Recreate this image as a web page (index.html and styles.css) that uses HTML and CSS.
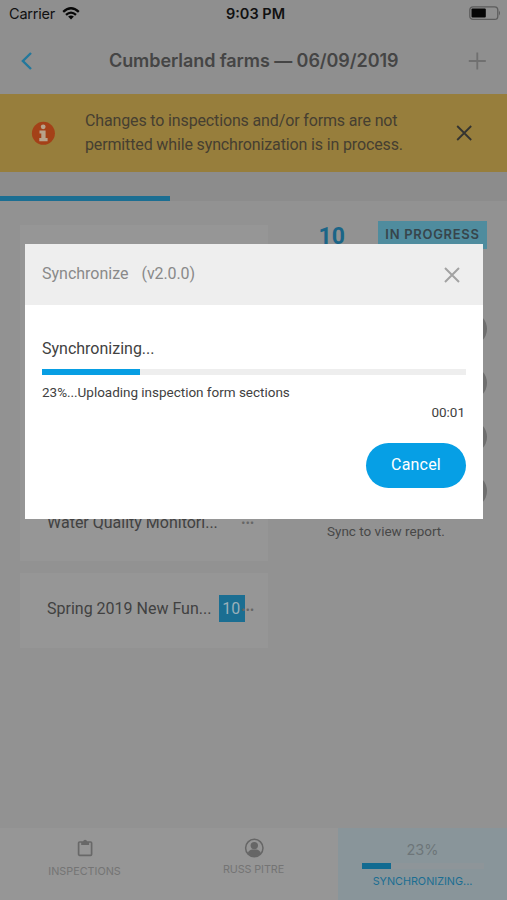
FILE: index.html
```html
<!DOCTYPE html>
<html lang="en">
<head>
<meta charset="utf-8">
<title>Synchronize</title>
<link rel="stylesheet" href="styles.css">
</head>
<body>
<div class="app">
  <header class="status">
    <span class="carrier">Carrier</span>
    <svg class="wifi" width="18" height="13" viewBox="0 0 18 13"><g fill="none" stroke="#080808" stroke-width="2.3"><path d="M1.2 4.8Q9-2.2 16.8 4.8"/><path d="M4 7.9Q9 3.4 14 7.9"/></g><path d="M6.1 9.6Q9 7.4 11.9 9.6L9 12.6Z" fill="#080808"/></svg>
    <span class="clock">9:03 PM</span>
    <svg class="battery" width="32" height="15" viewBox="0 0 32 15"><rect x=".8" y=".8" width="28" height="12.6" rx="3.2" fill="none" stroke="#5c5c5c" stroke-width="1.3"/><rect x="2.5" y="2.6" width="14.3" height="9" rx="1" fill="#050505"/><path d="M30 4.8Q32 7 30 9.4Z" fill="#5c5c5c"/></svg>
  </header>
  <nav class="nav">
    <svg class="back" width="12" height="18" viewBox="0 0 12 18"><path d="M11 1L2.9 9L11 17" fill="none" stroke="#23789c" stroke-width="2.4"/></svg>
    <h1>Cumberland farms — 06/09/2019</h1>
    <svg class="plus" width="18" height="18" viewBox="0 0 18 18"><path d="M9.3 .5V17.5M.8 9H17.8" stroke="#707070" stroke-width="1.8"/></svg>
  </nav>
  <section class="banner">
    <svg class="info" width="24" height="24" viewBox="0 0 24 24"><circle cx="12.4" cy="12.3" r="11.5" fill="#a44118"/><circle cx="12.2" cy="5.8" r="2.4" fill="#b7a38b"/><path d="M8.5 9.4H14.6V17H16.6V20.2H8.3V17H10.3V12.4H8.5Z" fill="#b7a38b"/></svg>
    <p><span class="line">Changes to inspections and/or forms are not</span><span class="line">permitted while synchronization is in process.</span></p>
    <svg class="dismiss" width="16" height="16" viewBox="0 0 16 16"><path d="M1.2 1L15.2 15M15.2 1L1.2 15" stroke="#343431" stroke-width="1.8"/></svg>
  </section>
  <div class="page-progress"><div class="page-fill"></div></div>
  <main class="content">
    <div class="list">
      <div class="card tall"><span class="name">Water Quality Monitori...</span><span class="dots">•••</span></div>
      <div class="card"><span class="name">Spring 2019 New Fun...</span><span class="count">10</span><span class="dots">•••</span></div>
    </div>
    <aside class="side">
      <div class="summary"><span class="total">10</span><span class="tag">IN PROGRESS</span></div>
      <div class="circles"><i></i><i></i><i></i><i></i></div>
      <p class="report">Sync to view report.</p>
    </aside>
  </main>
  <footer class="tabs">
    <div class="tab">
      <svg width="16" height="18" viewBox="0 0 16 18"><rect x="1.6" y="3" width="13" height="13.3" rx="1" fill="none" stroke="#686868" stroke-width="1.7"/><path d="M4.2 3H6Q6.4.8 8.1 .8T10.3 3H12.1V6H4.2Z" fill="#686868"/></svg>
      <span class="inspections">INSPECTIONS</span>
    </div>
    <div class="tab user">
      <svg width="20" height="20" viewBox="0 0 20 20"><circle cx="10.3" cy="10" r="8.7" fill="none" stroke="#666" stroke-width="1.5"/><circle cx="10.3" cy="7.6" r="3.7" fill="#666"/><path d="M3.7 15.2Q5.3 11.8 8.3 11.6H12.3Q15.3 11.8 16.9 15.2Q14.3 18.3 10.3 18.3T3.7 15.2Z" fill="#666"/></svg>
      <span class="russ">RUSS PITRE</span>
    </div>
    <div class="tab sync">
      <span class="percent">23%</span>
      <div class="mini"><div class="mini-fill"></div></div>
      <span class="syncing">SYNCHRONIZING...</span>
    </div>
  </footer>
  <section class="modal">
    <header class="modal-head">
      <span class="title">Synchronize</span><span class="version">(v2.0.0)</span>
      <svg class="close" width="16" height="16" viewBox="0 0 16 16"><path d="M1 1L15 15M15 1L1 15" stroke="#a2a2a2" stroke-width="2"/></svg>
    </header>
    <div class="modal-body">
      <div class="state">Synchronizing...</div>
      <div class="track"><div class="fill"></div></div>
      <div class="detail">23%...Uploading inspection form sections</div>
      <div class="time">00:01</div>
      <button class="cancel">Cancel</button>
    </div>
  </section>
</div>
</body>
</html>
```
FILE: styles.css
```css
* { box-sizing: border-box; }
body { margin: 0; font-family: Roboto, "Liberation Sans", sans-serif; color: #414141; }
h1, p { margin: 0; }
svg { display: block; flex: none; }
span { white-space: nowrap; }
.app { position: relative; width: 507px; height: 900px; overflow: hidden; display: flex; flex-direction: column; background: #929292; }

.status { height: 28px; flex: none; display: grid; grid-template-columns: 53px 1fr auto 1fr 38px; align-items: center; background: #8f8f8f; color: #111; padding: 0 0 0 9px; font-family: Inter, sans-serif; }
.carrier { font-size: 14.5px; letter-spacing: -.2px; margin-top: -1px; }
.wifi { margin-top: -2px; }
.clock { font-size: 14.5px; font-weight: 600; margin-right: 20px; margin-top: -1px; }
.battery { grid-column: 5; margin-top: -1px; }

.nav { height: 66px; flex: none; display: grid; grid-template-columns: 89px 1fr 18px; align-items: center; padding: 0 21px 0 20px; background: #8f8f8f; }
.nav h1 { font-family: Inter, sans-serif; font-size: 18px; font-weight: 600; letter-spacing: -.08px; line-height: 24px; white-space: nowrap; color: #454545; }

.banner { height: 78px; flex: none; display: grid; grid-template-columns: 54px 1fr 16px; align-items: center; padding: 0 35px 0 31px; background: #977e3c; color: #463f31; }
.line { display: block; font-size: 16px; letter-spacing: -.14px; line-height: 24px; }

.page-progress { height: 29px; flex: none; display: flex; align-items: flex-end; background: #8c8c8c; }
.page-fill { width: 170px; height: 5px; background: #1b6e92; }

.content { flex: 1; display: flex; padding: 20px 20px 0; }
.list { width: 248px; padding-top: 4px; display: flex; flex-direction: column; gap: 12px; }
.card { height: 75px; flex: none; display: flex; align-items: center; padding: 0 14px 4px 27px; background: #969696; }
.card.tall { height: 336px; align-items: flex-end; padding-bottom: 26px; }
.name { width: 173px; font-size: 16px; line-height: 24px; }
.count { width: 26px; height: 27px; line-height: 27px; font-size: 16px; padding-left: 3px; background: #1b6e92; color: #9ab0ba; }
.dots { margin-left: auto; font-family: Inter, sans-serif; font-size: 8px; line-height: 24px; color: #666; letter-spacing: -.2px; }
.card.tall .dots { line-height: 26px; }
.count + .dots { margin-left: -4px; }
.side { flex: 1; display: flex; flex-direction: column; }
.summary { display: flex; height: 28px; justify-content: flex-end; }
.total { font-size: 23px; font-weight: 700; line-height: 32px; margin-right: 33px; color: #1b6587; }
.tag { font-family: Inter, sans-serif; width: 109px; height: 28px; text-align: center; font-size: 13px; font-weight: 600; letter-spacing: .7px; line-height: 26px; color: #37454b; background: #4f8c9e; }
.circles { display: flex; flex-direction: column; align-items: flex-end; gap: 20px; padding-top: 63px; }
.circles i { width: 34px; height: 34px; border-radius: 50%; background: #6e6e6e; }
.report { font-size: 13.5px; line-height: 20px; margin-top: 13px; padding-left: 59px; white-space: nowrap; color: #484848; }

.tabs { height: 72px; flex: none; display: grid; grid-template-columns: 169px 169px 169px; background: #969696; color: #747474; font-family: Inter, sans-serif; }
.tab { display: flex; flex-direction: column; align-items: center; padding-top: 11px; font-size: 10.8px; line-height: 14px; }
.tab .inspections { margin-top: 8px; }
.tab.user { padding-top: 10px; }
.tab .russ { margin-top: 5px; letter-spacing: -.1px; }
.tab.sync { padding-top: 13px; background: #89959a; }
.percent { font-size: 14.5px; line-height: 18px; color: #6d7579; }
.mini { width: 122px; height: 6px; margin-top: 4px; background: #8e9599; }
.mini-fill { width: 29px; height: 6px; background: #126b91; }
.syncing { margin-top: 6px; color: #1b6e92; }

.modal { position: absolute; left: 25px; top: 244px; width: 458px; height: 275px; background: #fff; }
.modal-head { height: 61px; display: flex; align-items: center; padding: 0 23px 2px 17px; background: #eee; color: #898989; font-size: 16px; }
.version { margin-left: 13px; letter-spacing: -.1px; }
.close { margin-left: auto; margin-top: 2px; }
.modal-body { display: flex; flex-direction: column; padding: 31px 17px 0; }
.state { height: 24px; line-height: 25px; font-size: 16px; align-self: flex-start; }
.track { height: 6px; margin-top: 9px; background: #eee; }
.fill { width: 98px; height: 6px; background: #079ee3; }
.detail { align-self: flex-start; margin-top: 7px; font-size: 13.5px; letter-spacing: -.02px; line-height: 20px; }
.time { align-self: flex-end; font-size: 13.5px; line-height: 21px; margin-right: 1px; }
.cancel { align-self: flex-end; width: 100px; height: 45px; margin-top: 20px; padding: 0 0 3px; border: 0; border-radius: 23px; background: #069fe5; color: #fff; font: 400 16px Roboto, "Liberation Sans", sans-serif; letter-spacing: .2px; }
```
